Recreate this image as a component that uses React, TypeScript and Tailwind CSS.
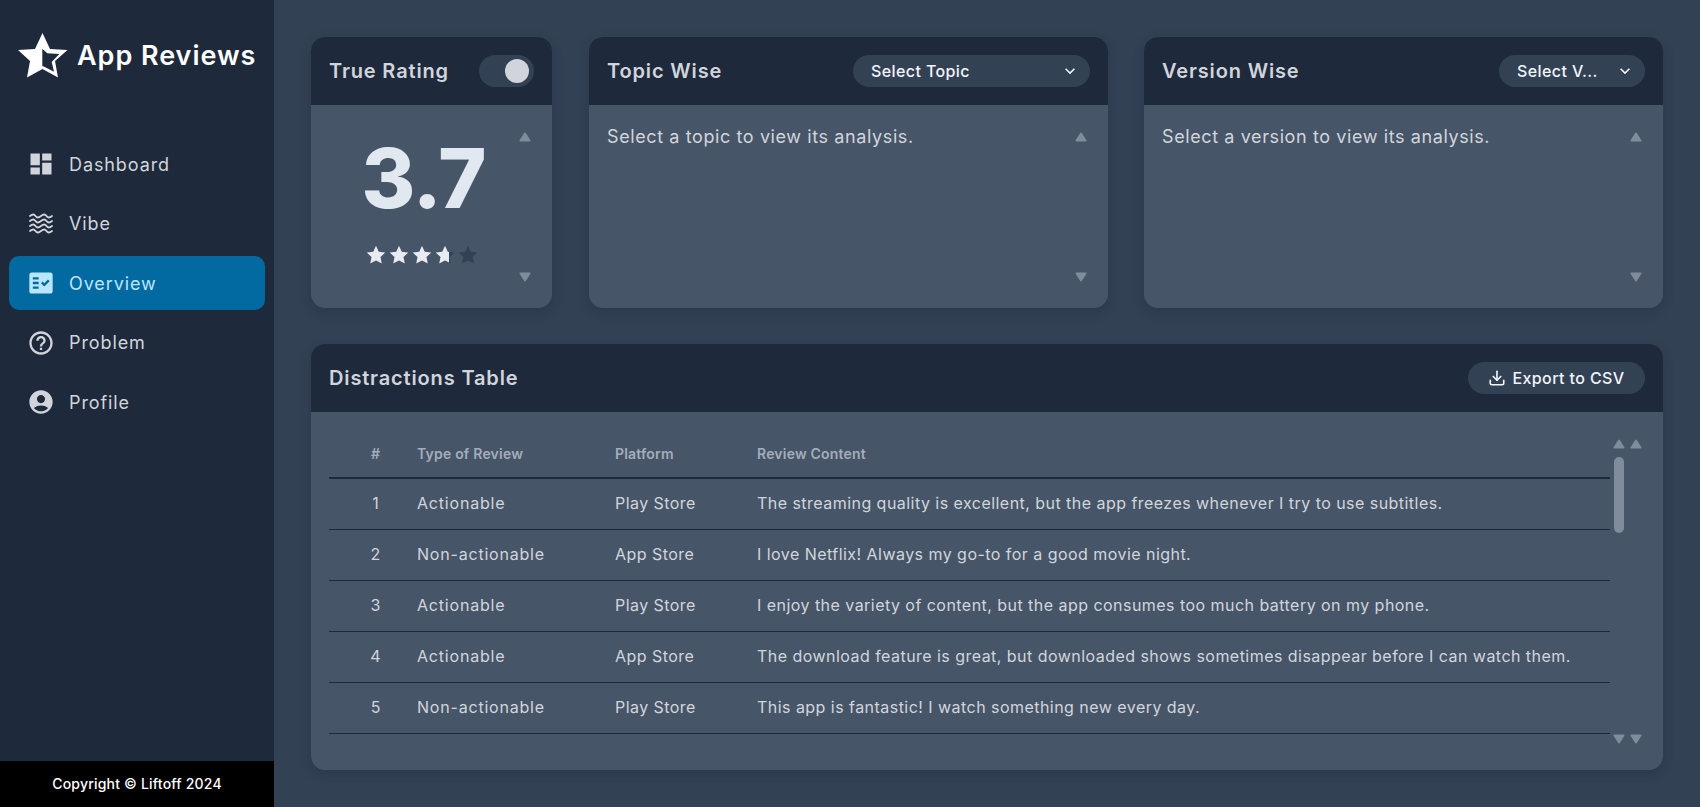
import { Download } from 'lucide-react';
import { MdDashboard, MdFactCheck, MdHelpOutline, MdAccountCircle, MdKeyboardArrowDown } from 'react-icons/md';

const reviews = [
  { n: 1, type: 'Actionable', platform: 'Play Store', text: 'The streaming quality is excellent, but the app freezes whenever I try to use subtitles.' },
  { n: 2, type: 'Non-actionable', platform: 'App Store', text: 'I love Netflix! Always my go-to for a good movie night.' },
  { n: 3, type: 'Actionable', platform: 'Play Store', text: 'I enjoy the variety of content, but the app consumes too much battery on my phone.' },
  { n: 4, type: 'Actionable', platform: 'App Store', text: 'The download feature is great, but downloaded shows sometimes disappear before I can watch them.' },
  { n: 5, type: 'Non-actionable', platform: 'Play Store', text: 'This app is fantastic! I watch something new every day.' },
];

function VibeIcon() {
  const waves = [4, 9, 14, 19];
  return (
    <svg viewBox="0 0 24 24" className="h-6 w-6" fill="none" stroke="currentColor" strokeWidth="1.8" strokeLinecap="round">
      {waves.map((y) => (
        <path key={y} d={`M1 ${y}c2.500-2 4-2 5.500 0s3 2 5.500 0 4-2 5.500 0 3 2 5.500 0`} />
      ))}
    </svg>
  );
}

function Logo() {
  return (
    <svg viewBox="0 0 50 45" className="h-[45px] w-[50px] shrink-0">
      <path
        fill="#fff"
        fillRule="evenodd"
        d="M24.500 0L32 16l17.500 1L37 28l3 16.500L24.500 36 9 44.500 12 28 0 17l17-1zM24.300 15.700V33l2 .7 9.700 5-2.300-9.700L41.300 21l-12-.7z"
      />
    </svg>
  );
}

function Arrow({ down }: { down?: boolean }) {
  return (
    <svg viewBox="0 0 12 10" className="h-[10px] w-[12px] text-[#808b9c]" fill="currentColor">
      <path d={down ? 'M1.500 0.500h9a1 1 0 0 1 .8 1.500L6.800 9a1 1 0 0 1-1.600 0L.7 2a1 1 0 0 1 .8-1.500z' : 'M5.200 1a1 1 0 0 1 1.600 0l4.500 7a1 1 0 0 1-.8 1.500h-9A1 1 0 0 1 .7 8z'} />
    </svg>
  );
}

function Star({ fill }: { fill: number }) {
  const d = 'M10 .8l2.800 6 6.500.8-4.800 4.500 1.300 6.500L10 15.400l-5.800 3.200 1.300-6.500L.7 7.600l6.500-.8z';
  return (
    <span className="relative h-5 w-5">
      <svg viewBox="0 0 20 20" className="absolute inset-0 h-5 w-5 text-[#334155]" fill="currentColor"><path d={d} /></svg>
      <span className="absolute inset-y-0 left-0 overflow-hidden" style={{ width: `${fill * 100}%` }}>
        <svg viewBox="0 0 20 20" className="h-5 w-5 text-[#e8ebf0]" fill="currentColor"><path d={d} /></svg>
      </span>
    </span>
  );
}

function NavItem({ label, icon, active }: { label: string; icon: React.ReactNode; active?: boolean }) {
  return (
    <div className={`flex h-[54px] items-center gap-[14px] rounded-[10px] pl-[18px] text-[18px] tracking-[0.9px] ${active ? 'bg-[#0369a1] text-[#bae6fd]' : 'text-[#d1d5db]'}`}>
      <span className="flex w-7 justify-center text-[28px]">{icon}</span>
      {label}
    </div>
  );
}

function Select({ label, className }: { label: string; className: string }) {
  return (
    <div className={`flex h-8 items-center justify-between rounded-full bg-[#334155] pl-[18px] pr-[10px] text-[16px] font-medium tracking-[0.4px] text-[#f1f5f9] ${className}`}>
      {label}
      <MdKeyboardArrowDown className="text-[20px]" />
    </div>
  );
}

function Card({ title, action, className, children }: { title: string; action: React.ReactNode; className: string; children: React.ReactNode }) {
  return (
    <section className={`flex flex-col overflow-hidden rounded-[14px] bg-[#475569] shadow-[0_4px_12px_rgba(15,23,42,0.2)] ${className}`}>
      <header className="flex h-[68px] shrink-0 items-center justify-between bg-[#1e293b] px-[18px]">
        <h2 className="text-[20px] font-semibold tracking-[0.85px] text-[#d1d5db]">{title}</h2>
        {action}
      </header>
      {children}
    </section>
  );
}

function ScrollPanel({ children }: { children: React.ReactNode }) {
  return (
    <div className="relative flex-1 px-[18px] pt-[18px] text-[18px] tracking-[0.6px] text-[#d1d5db]">
      {children}
      <div className="absolute right-[21px] top-[27px]"><Arrow /></div>
      <div className="absolute bottom-[26px] right-[21px]"><Arrow down /></div>
    </div>
  );
}

export default function App() {
  return (
    <div className="flex h-[807px] w-full bg-[#334155] font-['Inter',sans-serif]">
      <aside className="flex w-[274px] shrink-0 flex-col bg-[#1e293b]">
        <div className="flex flex-1 flex-col">
          <div className="flex items-center gap-[9px] pl-[18px] pt-[33px]">
            <Logo />
            <span className="mt-[1px] text-[27px] font-semibold tracking-[0.95px] text-white">App Reviews</span>
          </div>
          <nav className="mt-[59px] flex flex-col gap-[5.500px] px-[9px]">
            <NavItem label="Dashboard" icon={<MdDashboard />} />
            <NavItem label="Vibe" icon={<VibeIcon />} />
            <NavItem label="Overview" icon={<MdFactCheck />} active />
            <NavItem label="Problem" icon={<MdHelpOutline />} />
            <NavItem label="Profile" icon={<MdAccountCircle />} />
          </nav>
        </div>
        <footer className="flex h-[46px] items-center justify-center bg-black pb-[2px] text-[14px] font-medium tracking-[0.2px] text-white">
          Copyright © Liftoff 2024
        </footer>
      </aside>

      <main className="flex min-w-0 flex-1 flex-col gap-[36px] px-[37px] pt-[37px]">
        <div className="flex h-[271px] gap-[36px]">
          <Card
            title="True Rating"
            className="mr-px w-[241px]"
            action={
              <div className="flex h-8 w-[55px] items-center justify-end rounded-full bg-[#334155] pr-[5px]">
                <span className="h-6 w-6 rounded-full bg-[#d1d5db]" />
              </div>
            }
          >
            <div className="relative flex flex-1 flex-col items-center pr-[16px]">
              <div className="mt-[21px] text-[82px] font-extrabold leading-[106px] tracking-[-1px] text-[#e2e8f0]">3.7</div>
              <div className="mt-[13px] flex gap-[3px] pr-[4px]">
                <Star fill={1} />
                <Star fill={1} />
                <Star fill={1} />
                <Star fill={0.7} />
                <Star fill={0} />
              </div>
              <div className="absolute right-[21px] top-[27px]"><Arrow /></div>
              <div className="absolute bottom-[26px] right-[21px]"><Arrow down /></div>
            </div>
          </Card>
          <Card title="Topic Wise" className="flex-1" action={<Select label="Select Topic" className="w-[237px]" />}>
            <ScrollPanel>Select a topic to view its analysis.</ScrollPanel>
          </Card>
          <Card title="Version Wise" className="flex-1" action={<Select label="Select V..." className="w-[146px]" />}>
            <ScrollPanel>Select a version to view its analysis.</ScrollPanel>
          </Card>
        </div>

        <Card
          title="Distractions Table"
          className="h-[426px]"
          action={
            <div className="flex h-8 w-[177px] items-center justify-center gap-[6px] rounded-full bg-[#334155] text-[16px] font-medium tracking-[0.4px] text-[#f1f5f9]">
              <Download size={18} strokeWidth={2.2} />
              Export to CSV
            </div>
          }
        >
          <div className="relative flex-1 pl-[18px] pr-[53px] pt-[17px]">
            <table className="w-full table-fixed border-collapse text-left">
              <thead>
                <tr className="h-[49px] border-b-2 border-[#1e293b] text-[14px] tracking-[0.2px] text-[#a3adbb]">
                  <th className="w-[88px] pl-[5px] text-center font-semibold">#</th>
                  <th className="w-[198px] font-semibold">Type of Review</th>
                  <th className="w-[142px] font-semibold">Platform</th>
                  <th className="font-semibold">Review Content</th>
                </tr>
              </thead>
              <tbody>
                {reviews.map((r) => (
                  <tr key={r.n} className="h-[51px] border-b border-[#1e293b] text-[16px] text-[#d1d5db]">
                    <td className="pb-[2px] pl-[5px] text-center">{r.n}</td>
                    <td className="pb-[2px] tracking-[0.8px]">{r.type}</td>
                    <td className="pb-[2px] tracking-[0.45px]">{r.platform}</td>
                    <td className="whitespace-nowrap pb-[2px] tracking-[0.46px]">{r.text}</td>
                  </tr>
                ))}
              </tbody>
            </table>
            <div className="absolute right-[21px] top-[27px] flex gap-[5px]"><Arrow /><Arrow /></div>
            <div className="absolute right-[39px] top-[45px] h-[76px] w-[10px] rounded-full bg-[#808b9c]" />
            <div className="absolute right-[21px] top-[322px] flex gap-[5px]"><Arrow down /><Arrow down /></div>
          </div>
        </Card>
      </main>
    </div>
  );
}
